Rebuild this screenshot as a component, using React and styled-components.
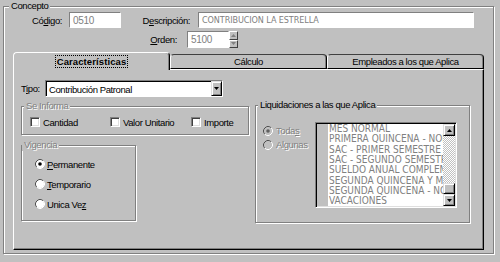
import React from "react";
import styled, { createGlobalStyle } from "styled-components";

const UI_FONT = `"Liberation Sans", Arial, sans-serif`;
const DATA_FONT = `"DejaVu Sans Condensed", "Liberation Sans", sans-serif`;

const GlobalStyle = createGlobalStyle`
  html, body { margin: 0; padding: 0; background: #c0c0c0; }
  body { font-family: ${UI_FONT}; font-size: 9.5px; letter-spacing: -0.4px; color: #000; }
  * { box-sizing: border-box; }
`;

const Window = styled.div`
  width: 500px;
  height: 262px;
  padding-left: 3px;
  background: #c0c0c0;
  overflow: hidden;
`;

const Group = styled.fieldset`
  margin: ${(p) => p.$mt || 0}px 0 0 0;
  padding: 0;
  min-width: 0;
  width: ${(p) => p.$w}px;
  height: ${(p) => p.$h}px;
  border: 1px solid #808080;
  box-shadow: inset 1px 1px 0 #fff, 1px 1px 0 #fff;
`;

const Legend = styled.legend`
  margin-left: ${(p) => p.$ml}px;
  padding: 0 2px;
  height: 12px;
  line-height: 12px;
  background: #c0c0c0;
  color: ${(p) => (p.$disabled ? "#808080" : "#000")};
  text-shadow: ${(p) => (p.$disabled ? "1px 1px 0 #fff" : "none")};
`;

const FieldRow = styled.div`
  display: flex;
  align-items: center;
  height: ${(p) => p.$h}px;
  margin-top: ${(p) => p.$mt || 0}px;
`;

const FieldLabel = styled.label`
  width: ${(p) => p.$w}px;
  margin-right: ${(p) => p.$mr}px;
  text-align: ${(p) => (p.$left ? "left" : "right")};
  white-space: nowrap;
`;

const TextBox = styled.div`
  width: ${(p) => p.$w}px;
  height: 100%;
  display: flex;
  align-items: center;
  padding: 0 3px;
  background: #fff;
  border: 1px solid;
  border-color: #808080 #fff #fff #808080;
  color: #808080;
  font-family: ${(p) => (p.$data ? DATA_FONT : UI_FONT)};
  font-size: ${(p) => (p.$data ? "9px" : "10px")};
  letter-spacing: ${(p) => (p.$data ? "-0.1px" : "-0.3px")};
  white-space: nowrap;
  overflow: hidden;
`;

const Spinner = styled.div`
  width: 9px;
  height: 100%;
  display: flex;
  flex-direction: column;
`;

const SpinButton = styled.div`
  flex: 1;
  display: flex;
  align-items: center;
  justify-content: center;
  background: #c0c0c0;
  border: 1px solid;
  border-color: #fff #404040 #404040 #fff;
`;

const Tabs = styled.div`
  margin: 4px 9px 0 9px;
`;

const TabStrip = styled.div`
  display: flex;
  align-items: flex-end;
  height: 17px;
`;

const Tab = styled.div`
  flex: 0 0 157px;
  height: ${(p) => (p.$active ? 18 : 15)}px;
  margin-bottom: ${(p) => (p.$active ? -1 : 0)}px;
  position: relative;
  z-index: ${(p) => (p.$active ? 1 : 0)};
  display: flex;
  align-items: center;
  justify-content: center;
  background: #c0c0c0;
  border-top: 1px solid ${(p) => (p.$active ? "#fff" : "#404040")};
  border-left: 1px solid #fff;
  border-right: 1px solid #000;
  border-bottom: ${(p) => (p.$active ? "none" : "1px solid #000")};
  border-radius: 4px 4px 0 0;
  box-shadow: inset -1px 0 0 #808080;
  font-weight: ${(p) => (p.$active ? 700 : 400)};
  letter-spacing: ${(p) => (p.$active ? "0.1px" : "-0.4px")};
`;

const FocusText = styled.span`
  outline: 1px dotted #000;
  padding: 0 1px;
  line-height: 11px;
`;

const Panel = styled.div`
  height: 181px;
  border: 1px solid;
  border-color: #fff #000 #000 #fff;
  box-shadow: inset -1px -1px 0 #808080;
  padding: 10px 0 0 7px;
`;

const ComboBox = styled.div`
  width: 178px;
  height: 100%;
  display: flex;
  background: #fff;
  border: 1px solid;
  border-color: #808080 #fff #fff #808080;
  box-shadow: inset 1px 1px 0 #000;
`;

const ComboText = styled.div`
  flex: 1;
  display: flex;
  align-items: center;
  padding: 1px 0 0 3px;
`;

const ArrowButton = styled.div`
  width: ${(p) => p.$w || 11}px;
  height: ${(p) => p.$h || "auto"};
  flex: ${(p) => (p.$h ? "none" : "0 0 auto")};
  display: flex;
  align-items: center;
  justify-content: center;
  background: #c0c0c0;
  border: 1px solid;
  border-color: #dfdfdf #000 #000 #dfdfdf;
  box-shadow: inset 1px 1px 0 #fff, inset -1px -1px 0 #808080;
`;

const Columns = styled.div`
  display: flex;
  align-items: flex-start;
  gap: 6px;
  margin-top: 2px;
`;

const LeftColumn = styled.div`
  display: flex;
  flex-direction: column;
  width: 228px;
  margin-top: 1px;
`;

const CheckRow = styled.div`
  display: grid;
  grid-template-columns: 80px 81px auto;
  padding: 4px 0 0 8px;
`;

const Option = styled.div`
  display: flex;
  align-items: center;
  height: ${(p) => p.$h || 12}px;
  gap: ${(p) => p.$gap || 3}px;
  color: ${(p) => (p.$disabled ? "#808080" : "#000")};
  text-shadow: ${(p) => (p.$disabled ? "1px 1px 0 #fff" : "none")};
  white-space: nowrap;
`;

const CheckBox = styled.span`
  width: 10px;
  height: 10px;
  flex: none;
  background: #fff;
  border: 1px solid;
  border-color: #808080 #fff #fff #808080;
  box-shadow: inset 1px 1px 0 #404040, inset -1px -1px 0 #dfdfdf;
`;

const RadioList = styled.div`
  display: flex;
  flex-direction: column;
  gap: ${(p) => p.$gap}px;
  padding: ${(p) => p.$pad};
  width: ${(p) => p.$w || "auto"};
  flex: none;
`;

const LiquidBody = styled.div`
  display: flex;
  align-items: flex-start;
  padding-top: 11px;
`;

const ListBox = styled.div`
  width: 142px;
  height: 86px;
  display: flex;
  padding: 1px;
  border: 1px solid;
  border-color: #808080 #fff #fff #808080;
  box-shadow: inset 1px 1px 0 #000, inset -1px -1px 0 #dfdfdf;
`;

const ListGutter = styled.div`
  width: 11px;
  background: #c0c0c0;
`;

const ListItems = styled.ul`
  flex: 1;
  margin: 0;
  padding: 0 0 0 1px;
  list-style: none;
  background: #fff;
  overflow: hidden;
  color: #808080;
  font-family: ${DATA_FONT};
  font-size: 10px;
  letter-spacing: 0;
  line-height: 10.35px;
  white-space: nowrap;
`;

const ScrollBar = styled.div`
  width: 12px;
  display: flex;
  flex-direction: column;
`;

const ScrollTrack = styled.div`
  flex: 1;
  background: repeating-conic-gradient(#fff 0 25%, #c0c0c0 0 50%) 0 0 / 2px 2px;
`;

const Thumb = styled.div`
  height: 11px;
  background: #c0c0c0;
  border: 1px solid;
  border-color: #dfdfdf #000 #000 #dfdfdf;
  box-shadow: inset 1px 1px 0 #fff, inset -1px -1px 0 #808080;
`;

const Triangle = ({ up, color = "#000", w = 5, h = 3 }) => (
  <svg width={w} height={h} viewBox={`0 0 ${w} ${h}`}>
    <path
      d={up ? `M0 ${h}L${w / 2} 0L${w} ${h}Z` : `M0 0L${w} 0L${w / 2} ${h}Z`}
      fill={color}
    />
  </svg>
);

const RadioIcon = ({ checked, disabled }) => (
  <svg width="10" height="10" viewBox="0 0 10 10" style={{ flex: "none" }}>
    <circle cx="5" cy="5" r="4" fill={disabled ? "#c0c0c0" : "#fff"} />
    <path d="M1.82 8.18A4.5 4.5 0 0 1 8.18 1.82" stroke="#505050" fill="none" />
    <path d="M8.18 1.82A4.5 4.5 0 0 1 1.82 8.18" stroke="#fff" fill="none" />
    {checked && (
      <circle cx="5" cy="5" r="1.8" fill={disabled ? "#606060" : "#000"} />
    )}
  </svg>
);

const liquidaciones = [
  "MES NORMAL",
  "PRIMERA QUINCENA - NORMAL",
  "SAC - PRIMER SEMESTRE",
  "SAC - SEGUNDO SEMESTRE",
  "SUELDO ANUAL COMPLEMENTARIO",
  "SEGUNDA QUINCENA Y MES",
  "SEGUNDA QUINCENA - NORMAL",
  "VACACIONES",
];

export default function App() {
  return (
    <Window>
      <GlobalStyle />
      <Group $w={491} $h={254}>
        <Legend $ml={5}>Concepto</Legend>
        <FieldRow $h={16}>
          <FieldLabel $w={58} $mr={7}>
            Có<u>d</u>igo:
          </FieldLabel>
          <TextBox $w={52}>0510</TextBox>
          <FieldLabel $w={69} $mr={8}>
            D<u>e</u>scripción:
          </FieldLabel>
          <TextBox $w={276} $data>
            CONTRIBUCION LA ESTRELLA
          </TextBox>
        </FieldRow>
        <FieldRow $h={17} $mt={3}>
          <FieldLabel $w={173} $mr={10}>
            <u>O</u>rden:
          </FieldLabel>
          <TextBox $w={42}>5100</TextBox>
          <Spinner>
            <SpinButton>
              <Triangle up color="#808080" w={5} h={3} />
            </SpinButton>
            <SpinButton>
              <Triangle color="#808080" w={5} h={3} />
            </SpinButton>
          </Spinner>
        </FieldRow>

        <Tabs>
          <TabStrip>
            <Tab $active>
              <FocusText>Características</FocusText>
            </Tab>
            <Tab>Cálculo</Tab>
            <Tab>Empleados a los que Aplica</Tab>
          </TabStrip>
          <Panel>
            <FieldRow $h={17}>
              <FieldLabel $w={24} $mr={0} $left>
                T<u>i</u>po:
              </FieldLabel>
              <ComboBox>
                <ComboText>Contribución Patronal</ComboText>
                <ArrowButton>
                  <Triangle />
                </ArrowButton>
              </ComboBox>
            </FieldRow>

            <Columns>
              <LeftColumn>
                <Group $w={228} $h={35}>
                  <Legend $ml={2} $disabled>
                    Se Informa
                  </Legend>
                  <CheckRow>
                    <Option>
                      <CheckBox />
                      Cantidad
                    </Option>
                    <Option>
                      <CheckBox />
                      Valor Unitario
                    </Option>
                    <Option>
                      <CheckBox />
                      Importe
                    </Option>
                  </CheckRow>
                </Group>
                <Group $w={115} $h={82} $mt={4}>
                  <Legend $ml={0} $disabled>
                    Vigencia
                  </Legend>
                  <RadioList $gap={8} $pad="7px 0 0 13px">
                    <Option $gap={2}>
                      <RadioIcon checked />
                      <span>
                        <u>P</u>ermanente
                      </span>
                    </Option>
                    <Option $gap={2}>
                      <RadioIcon />
                      <span>
                        <u>T</u>emporario
                      </span>
                    </Option>
                    <Option $gap={2}>
                      <RadioIcon />
                      <span>
                        Unica Ve<u>z</u>
                      </span>
                    </Option>
                  </RadioList>
                </Group>
              </LeftColumn>

              <Group $w={215} $h={124}>
                <Legend $ml={2}>Liquidaciones a las que Aplica</Legend>
                <LiquidBody>
                  <RadioList $gap={1} $pad="2px 0 0 7px" $w="59px">
                    <Option $h={13} $disabled>
                      <RadioIcon checked disabled />
                      <span>
                        Toda<u>s</u>
                      </span>
                    </Option>
                    <Option $h={13} $disabled>
                      <RadioIcon disabled />
                      <span>Algunas</span>
                    </Option>
                  </RadioList>
                  <ListBox>
                    <ListGutter />
                    <ListItems>
                      {liquidaciones.map((l) => (
                        <li key={l}>{l}</li>
                      ))}
                    </ListItems>
                    <ScrollBar>
                      <ArrowButton $w={12} $h="12px">
                        <Triangle up />
                      </ArrowButton>
                      <ScrollTrack />
                      <Thumb />
                      <ArrowButton $w={12} $h="12px">
                        <Triangle />
                      </ArrowButton>
                    </ScrollBar>
                  </ListBox>
                </LiquidBody>
              </Group>
            </Columns>
          </Panel>
        </Tabs>
      </Group>
    </Window>
  );
}
